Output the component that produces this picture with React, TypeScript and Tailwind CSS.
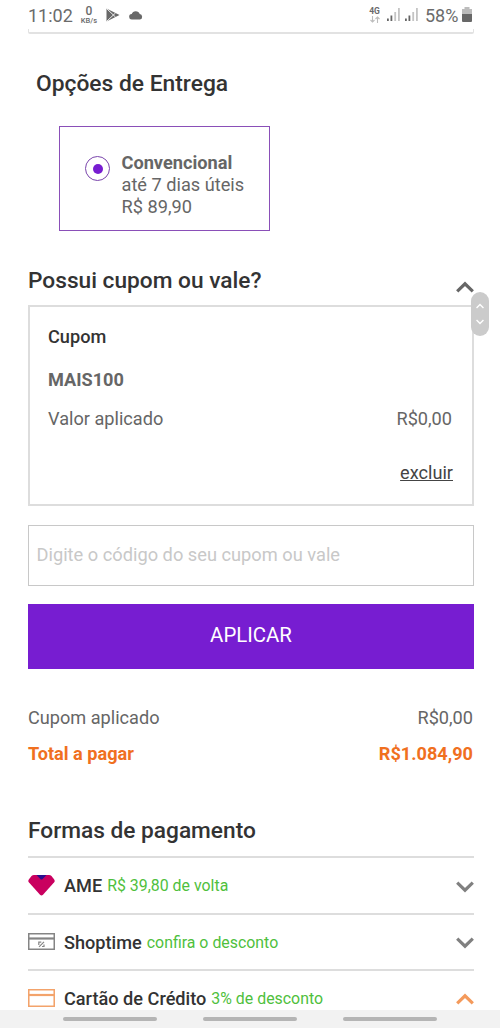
import { useState, type ReactNode } from "react";

type ChevronProps = {
  up?: boolean;
  className?: string;
};

function Chevron({ up = false, className = "" }: ChevronProps) {
  return (
    <svg
      width="18"
      height="12"
      viewBox="0 0 18 12"
      fill="none"
      stroke="currentColor"
      strokeWidth="3.2"
      className={className}
    >
      <path d={up ? "M1.2 10.3 9 2.8l7.8 7.5" : "M1.2 1.7l7.8 7.5 7.8-7.5"} />
    </svg>
  );
}

function Signal() {
  return (
    <svg width="14" height="14" viewBox="0 0 14 14">
      <path d="M0 10.5h1.8V13H0z M3.5 7.5h1.8V13H3.5z" fill="#666" />
      <path d="M7.3 4h1.8v9H7.3z M11 0h1.8v13H11z" fill="#c4c4c4" />
    </svg>
  );
}

function StatusBar() {
  return (
    <div className="flex h-[29px] shrink-0 items-center pl-7 pr-[28px] pt-[3px] text-[#6b6b6b]">
      <span className="w-[45px] whitespace-nowrap text-[18px] leading-none">11:02</span>
      <div className="mb-px ml-[7px] flex w-[18px] flex-col items-center font-medium">
        <span className="text-[12px] leading-[11px]">0</span>
        <span className="whitespace-nowrap text-[7.5px] leading-[8px]">KB/s</span>
      </div>
      <svg width="14" height="14" viewBox="0 0 14 14" className="mb-[2px] ml-2">
        <path d="M0.5 0.5 13.5 7 0.5 13.5z" fill="#686868" />
        <path d="M0.5 0.5 9.5 9 M0.5 13.5 9.5 5" stroke="#fff" strokeWidth="0.9" />
      </svg>
      <svg width="14" height="10" viewBox="0 0 14 10" className="mb-[3px] ml-[9px]">
        <path
          d="M3 9.5a2.7 2.7 0 0 1-.3-5.400A4.2 4.2 0 0 1 10.7 4 2.8 2.8 0 0 1 11 9.5z"
          fill="#686868"
        />
      </svg>
      <div className="mb-[3px] ml-auto flex w-[11px] flex-col items-center">
        <span className="text-[8.5px] font-bold leading-[9px]">4G</span>
        <svg width="10" height="7" viewBox="0 0 10 7" fill="none" stroke="#bdbdbd" strokeWidth="1.1">
          <path d="M2.5 0v6M.5 4l2 2 2-2 M7.5 7V1M5.5 3l2-2 2 2" />
        </svg>
      </div>
      <div className="mb-[2px] ml-[7px] flex gap-1">
        <Signal />
        <Signal />
      </div>
      <span className="ml-[6px] w-[33px] whitespace-nowrap text-[18px] leading-none">58%</span>
      <svg width="10" height="15" viewBox="0 0 10 15" className="mb-[3px] ml-1">
        <path d="M2.5 0h5v2H10v6H0V2h2.5z" fill="#bcbcbc" />
        <path d="M0 7h10v7a1 1 0 0 1-1 1H1a1 1 0 0 1-1-1z" fill="#686868" />
      </svg>
    </div>
  );
}

function DeliveryOption() {
  return (
    <div className="ml-[59px] mt-[27px] flex h-[105px] w-[211px] shrink-0 border border-[#8a4fb8] pl-[25px] pt-[25px]">
      <div className="mt-[4px] flex size-[25px] shrink-0 items-center justify-center rounded-full border-[1.5px] border-[#7a45ac]">
        <div className="size-[10px] rounded-full bg-[#771dd1]" />
      </div>
      <div className="ml-[11.5px] whitespace-nowrap text-[18.2px] leading-[22px] text-[#666]">
        <p className="font-bold">Convencional</p>
        <p>até 7 dias úteis</p>
        <p>R$ 89,90</p>
      </div>
    </div>
  );
}

function CouponBox() {
  return (
    <div className="mt-[10px] flex h-[201px] flex-col border-2 border-[#ddd] pl-[18px] pr-[19px] text-[18.15px] leading-[22px] text-[#666]">
      <p className="mt-[19px] font-medium text-[#333]">Cupom</p>
      <p className="mt-[21px] font-bold">MAIS100</p>
      <div className="mt-[17px] flex justify-between">
        <span>Valor aplicado</span>
        <span className="mr-px">R$0,00</span>
      </div>
      <button className="mt-[32px] self-end text-[#444] underline">excluir</button>
    </div>
  );
}

function AmeIcon() {
  return (
    <svg width="27" height="21" viewBox="0 0 27 21">
      <path
        d="M6 0h15q1.5 0 2.5 1L26.2 4.5q1 1.5 0 2.8L15 19.8q-1.5 1.4-3 0L.8 7.3q-1-1.3 0-2.8L3.5 1Q4.5 0 6 0z"
        fill="#c9005f"
      />
      <path d="M8.5 0h10l-3.8 4q-1.2 1-2.4 0z" fill="#2a0f8f" />
    </svg>
  );
}

function StoreCardIcon() {
  return (
    <svg width="27" height="17" viewBox="0 0 27 17" fill="none" stroke="#858585">
      <path d="M.75 .75h25.5v15.5H.75z" strokeWidth="1.5" />
      <path d="M1 5.5h25" strokeWidth="2.2" />
      <path d="M10.8 12V9.2h2.5M11 13.800l5-5M14 13.5h2v-2" strokeWidth="1.2" />
    </svg>
  );
}

function CreditCardIcon() {
  return (
    <svg width="27" height="18" viewBox="0 0 27 18" fill="none" stroke="#f3a36b">
      <path d="M.75 .75h25.5v16.5H.75z" strokeWidth="1.6" />
      <path d="M1 6h25" strokeWidth="2.2" />
    </svg>
  );
}

type PaymentMethodProps = {
  icon: ReactNode;
  name: string;
  benefit: string;
  open: boolean;
  onClick: () => void;
};

function PaymentMethod({ icon, name, benefit, open, onClick }: PaymentMethodProps) {
  return (
    <button
      onClick={onClick}
      className="flex h-[56.5px] w-full shrink-0 items-center whitespace-nowrap border-t-2 border-[#ddd] pt-px text-left"
    >
      <span className="mb-px w-9">{icon}</span>
      <span className="text-[18.15px] font-medium text-[#333]">{name}</span>
      <span className="ml-[5px] mt-px text-[15.9px] text-[#4fbf3d]">{benefit}</span>
      <Chevron
        up={open}
        className={open ? "ml-auto mt-px text-[#f49a5c]" : "ml-auto mt-[2px] text-[#808080]"}
      />
    </button>
  );
}

const methods = [
  { name: "AME", benefit: "R$ 39,80 de volta", icon: <AmeIcon /> },
  { name: "Shoptime", benefit: "confira o desconto", icon: <StoreCardIcon /> },
  { name: "Cartão de Crédito", benefit: "3% de desconto", icon: <CreditCardIcon /> },
];

export default function App() {
  const [coupon, setCoupon] = useState("");
  const [selected, setSelected] = useState("Cartão de Crédito");

  return (
    <div className="relative flex h-[1028px] w-[500px] flex-col overflow-hidden bg-white font-['Roboto',sans-serif]">
      <StatusBar />
      <div className="ml-7 mr-[26px] h-[5px] shrink-0 rounded-b-xs border-x border-b-2 border-[#e2e2e2]" />

      <h2 className="ml-9 mt-[35px] text-[22.8px] font-medium leading-[30px] text-[#333]">
        Opções de Entrega
      </h2>
      <DeliveryOption />

      <div className="ml-7 mr-[26px] mt-[34px] flex h-[30px] shrink-0 items-center justify-between">
        <h2 className="mt-[2px] text-[22.7px] font-medium leading-[30px] text-[#333]">
          Possui cupom ou vale?
        </h2>
        <Chevron up className="mt-[14px] text-[#666]" />
      </div>
      <div className="ml-7 mr-[26px] flex shrink-0 flex-col">
        <CouponBox />
        <input
          value={coupon}
          onChange={(e) => setCoupon(e.target.value)}
          placeholder="Digite o código do seu cupom ou vale"
          className="mt-[19px] h-[61px] border border-[#c8c8c8] pb-[2px] pl-[7.5px] text-[18.25px] outline-none placeholder:text-[#c8c8c8]"
        />
        <button className="mt-[18px] h-[65px] bg-[#771dd1] pb-[3px] text-[20.4px] text-white">
          APLICAR
        </button>

        <div className="mt-[37px] flex justify-between pr-px text-[18.15px] leading-[24px] text-[#666]">
          <span>Cupom aplicado</span>
          <span>R$0,00</span>
        </div>
        <div className="mt-[12px] flex justify-between pr-px text-[18.15px] font-bold leading-[24px] text-[#f0701f]">
          <span>Total a pagar</span>
          <span>R$1.084,90</span>
        </div>

        <h2 className="mb-[10px] mt-[50px] text-[22.7px] font-medium leading-[30px] text-[#333]">
          Formas de pagamento
        </h2>
        {methods.map((m) => (
          <PaymentMethod
            key={m.name}
            {...m}
            open={selected === m.name}
            onClick={() => setSelected(m.name)}
          />
        ))}
      </div>

      {/* Scroll handle */}
      <div className="absolute left-[471px] top-[292px] flex h-[44px] w-[18px] flex-col items-center justify-center gap-[10px] rounded-full bg-[#cbcbcb] text-white">
        <Chevron up className="h-[6px] w-[8px]" />
        <Chevron className="h-[6px] w-[8px]" />
      </div>

      {/* Gesture bar */}
      <div className="absolute inset-x-0 bottom-0 flex h-[18px] justify-center gap-[46px] bg-[#f2f2f2] pt-[7px]">
        <div className="h-1 w-[94px] rounded-full bg-[#b5b5b5]" />
        <div className="h-1 w-[94px] rounded-full bg-[#b5b5b5]" />
        <div className="h-1 w-[94px] rounded-full bg-[#b5b5b5]" />
      </div>
    </div>
  );
}
